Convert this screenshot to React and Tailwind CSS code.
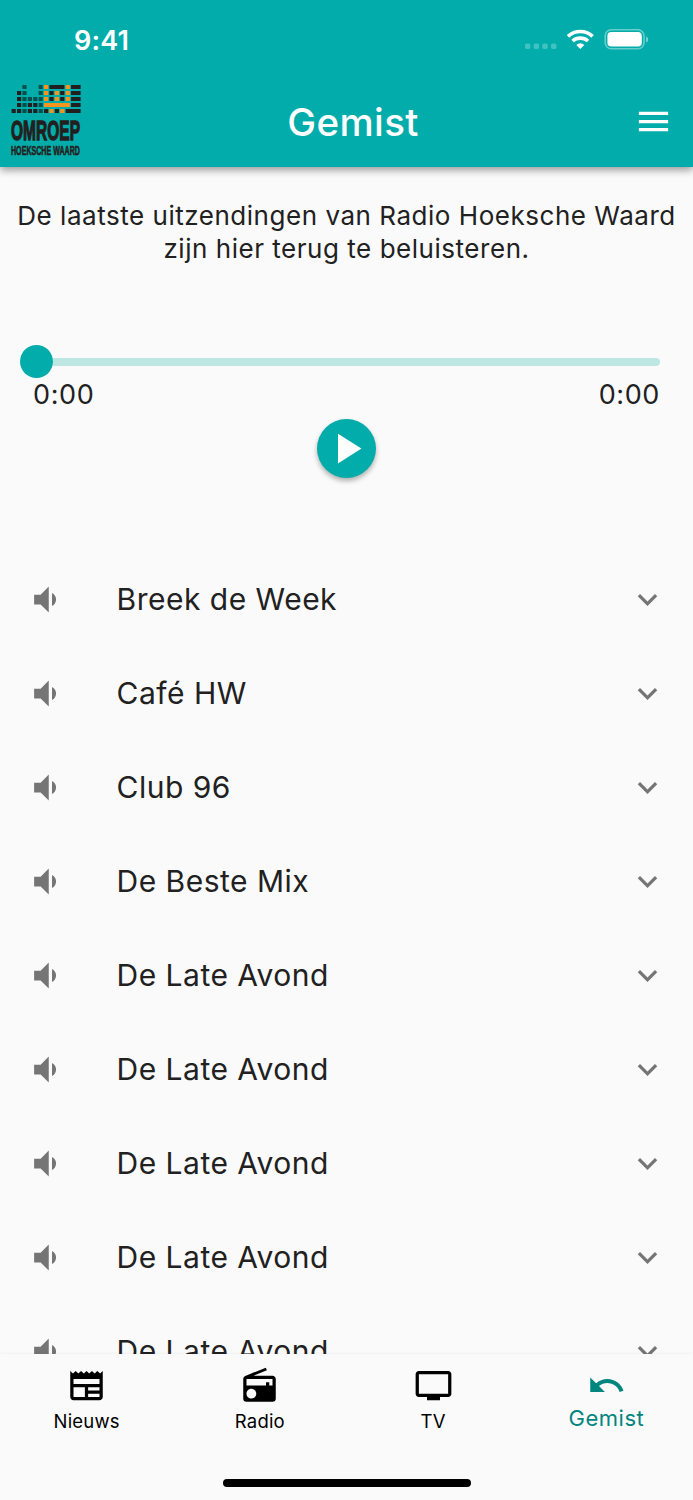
import {
  MdExpandMore,
  MdMenu,
  MdNewspaper,
  MdPlayArrow,
  MdRadio,
  MdTv,
  MdUndo,
  MdVolumeDown,
} from "react-icons/md";

const programs = [
  "Breek de Week",
  "Café HW",
  "Club 96",
  "De Beste Mix",
  "De Late Avond",
  "De Late Avond",
  "De Late Avond",
  "De Late Avond",
  "De Late Avond",
];

const tabs = [
  { label: "Nieuws", icon: MdNewspaper },
  { label: "Radio", icon: MdRadio },
  { label: "TV", icon: MdTv },
  { label: "Gemist", icon: MdUndo, active: true },
];

// equalizer blocks: [column, row, span, colour]
const K = "#231f20";
const T = "#02514f";
const O = "#f7941d";
const blocks = [
  [2, 0, 1, T], [5, 0, 1, T], [6, 0, 1, O], [7, 0, 3, K], [10, 0, 1, O], [11, 0, 2, K],
  [1, 1, 1, K], [2, 1, 1, T], [5, 1, 1, T], [6, 1, 1, O], [7, 1, 1, K], [8, 1, 1, O], [9, 1, 1, K], [10, 1, 1, O], [11, 1, 2, K],
  [1, 2, 1, K], [2, 2, 1, T], [3, 2, 1, T], [4, 2, 1, T], [5, 2, 1, T], [6, 2, 1, O], [7, 2, 1, K], [8, 2, 1, O], [9, 2, 1, K], [10, 2, 1, O], [11, 2, 2, K],
  [1, 3, 1, K], [2, 3, 1, T], [3, 3, 1, K], [4, 3, 1, K], [5, 3, 1, T], [6, 3, 5, O], [11, 3, 2, K],
  [0, 4, 1, K], [1, 4, 1, K], [2, 4, 1, T], [3, 4, 1, K], [4, 4, 1, K], [5, 4, 1, T], [6, 4, 1, K], [7, 4, 1, O], [8, 4, 1, K], [9, 4, 1, O], [10, 4, 3, K],
];

const Logo = () => (
  <svg width="74" height="74" viewBox="0 0 74 74" className="shrink-0 overflow-visible">
    {blocks.map(([col, row, span, fill]) => (
      <rect
        key={`${col}-${row}`}
        x={1.6 + col * 5.4}
        y={1 + row * 6}
        width={span * 5.4 - 1.2}
        height="4"
        fill={fill}
      />
    ))}
    <text
      x="1"
      y="56"
      fontSize="28"
      fontWeight="700"
      fill={K}
      stroke={K}
      strokeWidth="1.3"
      textLength="69"
      lengthAdjust="spacingAndGlyphs"
      fontFamily="Liberation Sans, sans-serif"
    >
      OMROEP
    </text>
    <text
      x="1"
      y="71"
      fontSize="12.6"
      fontWeight="700"
      fill={K}
      stroke={K}
      strokeWidth="0.6"
      textLength="69"
      lengthAdjust="spacingAndGlyphs"
      fontFamily="Liberation Sans, sans-serif"
    >
      HOEKSCHE WAARD
    </text>
  </svg>
);

const StatusBar = () => (
  <div className="flex h-[76px] items-center justify-between pl-[74px] pr-11 text-white">
    <span className="pt-1 text-[27px] font-semibold leading-none tracking-[0.2px]">9:41</span>
    <svg width="124" height="24" viewBox="0 0 124 24" fill="white" className="mt-[5px]">
      {[0, 8.7, 17.3, 26].map((x) => (
        <rect key={x} x={x} y="14.5" width="5.4" height="5.4" rx="1.6" opacity="0.25" />
      ))}
      <g fill="none" stroke="white" strokeWidth="3.6">
        <path d="M43 7.3a18.2 18.2 0 0 1 24.6 0" />
        <path d="M47.6 12a11.8 11.8 0 0 1 15.4 0" />
      </g>
      <path d="M55.3 20l-4-4.1a6 6 0 0 1 8 0z" />
      <rect x="80.2" y="0.8" width="38.8" height="19" rx="6" fill="none" stroke="white" strokeWidth="1.6" opacity="0.4" />
      <rect x="82.4" y="3" width="34.4" height="14.6" rx="3.8" />
      <path d="M121.2 7.5v6c2.6-1.2 2.6-4.8 0-6z" opacity="0.5" />
    </svg>
  </div>
);

const Player = () => (
  <div className="pt-20">
    <div className="flex items-center pl-5 pr-5">
      <div className="size-[33px] rounded-full bg-[#02acab]"></div>
      <div className="mr-[13px] h-2 flex-1 rounded-r-full bg-[#bee7e4]"></div>
    </div>
    <div className="flex justify-between px-[33px] pt-[1px] text-[27px] leading-8 tracking-[0.6px]">
      <span>0:00</span>
      <span>0:00</span>
    </div>
    <div className="flex justify-center pt-2">
      <button className="flex size-[59px] items-center justify-center rounded-full bg-[#02acab] text-white shadow-[0_3px_5px_rgba(0,0,0,0.3)]">
        <MdPlayArrow size={51} />
      </button>
    </div>
  </div>
);

const App = () => {
  return (
    <div className="flex h-[1500px] w-[693px] flex-col overflow-hidden bg-[#fafafa] font-[Inter,sans-serif] text-[#212121]">
      <header className="z-10 h-[167px] shrink-0 bg-[#02acab] shadow-[0_3px_8px_rgba(0,0,0,0.4)]">
        <StatusBar />
        <div className="flex h-[91px] items-center justify-between pl-[10px] pr-5">
          <div className="w-[76px] pb-[2px]">
            <Logo />
          </div>
          <h1 className="pt-[1px] text-[38.5px] font-medium leading-none tracking-[0.4px] text-white">
            Gemist
          </h1>
          <div className="flex w-[53px] justify-end text-white">
            <MdMenu size={39} />
          </div>
        </div>
      </header>

      <main className="min-h-0 flex-1 overflow-hidden">
        <p className="pt-[33px] text-center text-[26px] leading-[32.5px] tracking-[0.53px]">
          De laatste uitzendingen van Radio Hoeksche Waard
          <br />
          zijn hier terug te beluisteren.
        </p>
        <Player />
        <ul className="pt-[74px]">
          {programs.map((title, i) => (
            <li key={i} className="flex h-[94px] items-center px-[26px]">
              <MdVolumeDown size={39} className="shrink-0 text-[#757575]" />
              <span className="flex-1 pl-[51.5px] text-[30px] tracking-[0.5px]">{title}</span>
              <MdExpandMore size={39} className="shrink-0 text-[#757575]" />
            </li>
          ))}
        </ul>
      </main>

      <nav className="flex h-[146px] shrink-0 flex-col justify-between shadow-[0_-1px_3px_rgba(0,0,0,0.04)]">
        <div className="grid grid-cols-4">
          {tabs.map(({ label, icon: Icon, active }) => (
            <div
              key={label}
              className={`flex flex-col items-center pt-3 ${
                active ? "text-[#00857f]" : "text-black"
              }`}
            >
              <Icon size={39} />
              <span
                className={
                  active
                    ? "text-[22px] leading-[27px] tracking-[0.5px]"
                    : "pt-[2px] text-[18.5px] leading-7 tracking-[0.2px]"
                }
              >
                {label}
              </span>
            </div>
          ))}
        </div>
        <div className="mx-auto mb-[13px] h-2 w-[248px] rounded-full bg-black"></div>
      </nav>
    </div>
  );
};

export default App;
